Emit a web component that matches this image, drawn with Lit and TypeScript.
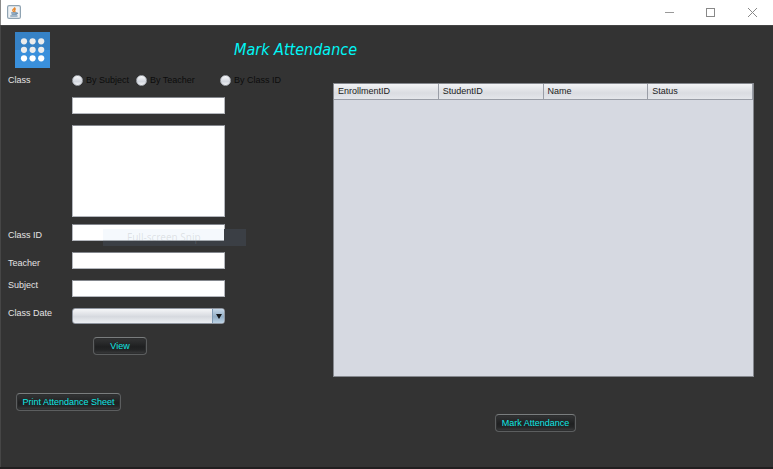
import { LitElement, html, svg, css } from "lit";
import { customElement, state } from "lit/decorators.js";

@customElement("app-root")
export class AppRoot extends LitElement {
  @state() private columns = ["EnrollmentID", "StudentID", "Name", "Status"];

  static styles = css`
    :host {
      display: flex;
      flex-direction: column;
      min-height: 100vh;
      box-sizing: border-box;
      position: relative;
      background: #333333;
      border-bottom: 2px solid #211f20;
      font: 9px/11px "Liberation Sans", Arial, sans-serif;
      color: #e4e4e4;
    }
    * {
      box-sizing: border-box;
    }
    button,
    input,
    textarea,
    select {
      font: inherit;
      margin: 0;
    }
    .titlebar {
      display: flex;
      align-items: center;
      justify-content: space-between;
      height: 25px;
      padding: 0 14px 2px 6px;
      background: #ffffff;
      border-left: 1px solid #8a8a8a;
    }
    .java {
      display: block;
      width: 14px;
      height: 14px;
    }
    .controls {
      display: flex;
      gap: 27px;
    }
    .controls button {
      width: 14px;
      height: 14px;
      padding: 0;
      border: 0;
      background: none;
    }
    .controls svg {
      display: block;
    }
    .content {
      flex: 1;
      display: flex;
      flex-direction: column;
      border-left: 1px solid #464646;
      border-top: 1px solid #444444;
    }
    .heading {
      display: flex;
      align-items: center;
      gap: 184px;
      height: 48px;
      padding-left: 14px;
    }
    .logo {
      display: block;
      width: 35px;
      height: 36px;
    }
    h1 {
      margin: 0;
      font: italic 16px/20px "DejaVu Sans Condensed", "DejaVu Sans", sans-serif;
      color: #00f6f6;
      white-space: nowrap;
    }
    .columns {
      flex: 1;
      display: grid;
      grid-template-columns: 332px minmax(0, 1fr);
    }
    .form {
      display: grid;
      grid-template-columns: 64px 153px;
      align-content: start;
      row-gap: 11px;
      padding-left: 7px;
    }
    .top {
      align-self: center;
    }
    .low {
      align-self: end;
    }
    .radios {
      display: grid;
      grid-template-columns: 64px 84px auto;
      height: 12px;
      color: #0c0c0c;
    }
    .radios label {
      display: flex;
      align-items: center;
      gap: 3px;
      white-space: nowrap;
    }
    .radios input {
      appearance: none;
      width: 11px;
      height: 11px;
      border: 1px solid #a4a8af;
      border-radius: 50%;
      background: linear-gradient(#f8f9fb, #d2d6de 60%, #f0f2f5);
    }
    .radios input:checked {
      background: radial-gradient(#222222 30%, #e4e7ec 40%);
    }
    .field {
      grid-column: 2;
      display: block;
      width: 100%;
      height: 17px;
      padding: 0 4px;
      border: 1px solid #b4b7bd;
      border-top-color: #84878d;
      border-radius: 0;
      background: #ffffff;
      color: #111111;
    }
    .notes {
      height: 92px;
      margin-bottom: -4px;
      resize: none;
    }
    .picker {
      position: relative;
      height: 16px;
    }
    .picker select {
      appearance: none;
      display: block;
      width: 100%;
      height: 16px;
      padding: 0 14px 0 4px;
      border: 1px solid #8f959f;
      border-radius: 3px;
      background: linear-gradient(#f5f6f8, #d6d9df 55%, #edeff3);
      color: #111111;
    }
    .arrow {
      position: absolute;
      top: 1px;
      right: 1px;
      width: 12px;
      height: 14px;
      border-left: 1px solid #7f9ab4;
      border-radius: 0 2px 2px 0;
      background: linear-gradient(#c6d8e8, #92adc5 55%, #bdd4e6);
      pointer-events: none;
    }
    .arrow svg {
      display: block;
    }
    .action {
      height: 18px;
      padding: 0;
      border: 1px solid #5c5e5f;
      border-top-color: #7a7d7e;
      border-radius: 4px;
      background: linear-gradient(#343536, #1f2021 55%, #242526 75%, #3d3e3f);
      box-shadow: inset 0 0 0 1px #2d2e2f;
      color: #10e8e4;
      text-align: center;
      white-space: nowrap;
    }
    .view {
      grid-column: 2;
      justify-self: start;
      width: 54px;
      margin: 2px 0 0 21px;
    }
    .print {
      grid-column: 1 / -1;
      justify-self: start;
      width: 105px;
      margin: 27px 0 0 8px;
    }
    .roster {
      display: flex;
      flex-direction: column;
      padding: 9px 19px 35px 0;
    }
    .panel {
      flex: 1;
      border: 1px solid #85888e;
      background: #d6d9e1;
    }
    table {
      width: 100%;
      table-layout: fixed;
      border-collapse: separate;
      border-spacing: 0;
    }
    th {
      height: 16px;
      padding: 0 4px;
      border-right: 1px solid #9a9ea7;
      border-bottom: 1px solid #9a9ea7;
      background: linear-gradient(#f3f4f6, #dadce1 60%, #e4e6ea);
      color: #1c1c22;
      font-weight: normal;
      text-align: left;
    }
    .mark {
      width: 81px;
      margin: 37px 0 0 162px;
    }
    .snip {
      position: absolute;
      left: 103px;
      top: 229px;
      width: 143px;
      height: 17px;
      padding-left: 24px;
      background:
        linear-gradient(#f5f9fd, #f5f9fd) 0 0 / 121px 11px no-repeat,
        linear-gradient(#a4a9af, #a4a9af) 0 11px / 121px 1px no-repeat,
        #3b3f45;
      color: rgba(150, 155, 160, 0.25);
      font: 10px/17px "Noto Sans", sans-serif;
      pointer-events: none;
    }
  `;

  render() {
    return html`
      <header class="titlebar">
        <svg class="java" viewBox="0 0 14 14" aria-hidden="true">
          <rect x=".6" y=".6" width="12.8" height="12.8" rx="1.5" fill="#eef2f5" stroke="#8fa3b2" stroke-width="1.2" />
          <path d="M7.600 2.200c.5 1.500-2.600 2.100-1.800 3.500l1 1.300M8.800 3.600C7.500 4.300 7.100 5 7.900 5.800 8.300 6.400 7.900 6.800 7.500 7.200" fill="none" stroke="#e8872c" stroke-width="1.300" />
          <path d="M4.200 7.900h5v1.300H4.600M3.300 11h7.200M9.400 7.700c1.900-.2 1.400 1.400 0 1.700" fill="none" stroke="#557b9c" stroke-width="1" />
        </svg>
        <div class="controls">
          <button aria-label="Minimize">
            <svg width="14" height="14"><path d="M2 7.500h9" stroke="#999" /></svg>
          </button>
          <button aria-label="Maximize">
            <svg width="14" height="14"><rect x="2.500" y="3.500" width="8" height="8" fill="none" stroke="#888" /></svg>
          </button>
          <button aria-label="Close">
            <svg width="14" height="14"><path d="M3 3l9 9M12 3l-9 9" stroke="#888" /></svg>
          </button>
        </div>
      </header>
      <main class="content">
        <div class="heading">
          <svg class="logo" viewBox="0 0 35 36" aria-hidden="true">
            <rect width="35" height="36" fill="#3a90dc" />
            <rect width="35" height="18" fill="#3682c6" />
            ${[9.3, 17.8, 26.3].map((y) =>
              [9, 17.6, 26.2].map(
                (x) => svg`<circle cx=${x} cy=${y} r="3.1" fill=${y < 20 ? "#ececec" : "#ffffff"} />`
              )
            )}
          </svg>
          <h1>Mark Attendance</h1>
        </div>
        <div class="columns">
          <form class="form" @submit=${(e: Event) => e.preventDefault()}>
            <label class="top" for="search">Class</label>
            <div class="radios">
              <label><input type="radio" name="by" />By Subject</label>
              <label><input type="radio" name="by" />By Teacher</label>
              <label><input type="radio" name="by" />By Class ID</label>
            </div>
            <input class="field" id="search" />
            <textarea class="field notes" aria-label="Classes"></textarea>
            <label class="low" for="class-id">Class ID</label>
            <input class="field" id="class-id" />
            <label class="low" for="teacher">Teacher</label>
            <input class="field" id="teacher" />
            <label for="subject">Subject</label>
            <input class="field" id="subject" />
            <label for="date">Class Date</label>
            <div class="picker">
              <select id="date"><option></option></select>
              <span class="arrow">
                <svg width="11" height="14"><path d="M3 5h6L6 10z" fill="#15181c" /></svg>
              </span>
            </div>
            <button class="action view" type="button">View</button>
            <button class="action print" type="button">Print Attendance Sheet</button>
          </form>
          <section class="roster">
            <div class="panel">
              <table>
                <thead>
                  <tr>${this.columns.map((c) => html`<th scope="col">${c}</th>`)}</tr>
                </thead>
              </table>
            </div>
            <div><button class="action mark">Mark Attendance</button></div>
          </section>
        </div>
      </main>
      <div class="snip">Full-screen Snip</div>
    `;
  }
}
